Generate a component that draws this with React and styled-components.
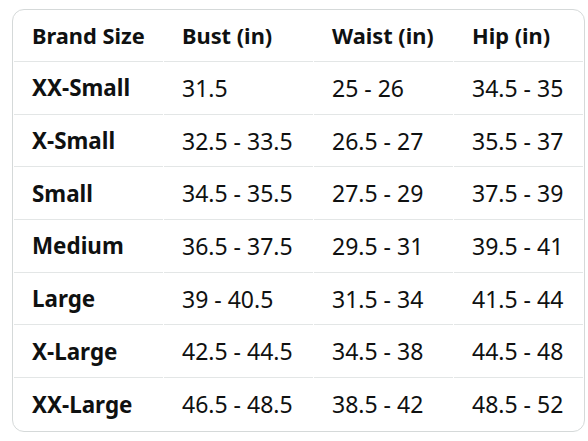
import React from "react";
import styled, { createGlobalStyle } from "styled-components";

const GlobalStyle = createGlobalStyle`
  html, body { margin: 0; padding: 0; background: #ffffff; }
  body { font-family: "Noto Sans", "Open Sans", Arial, sans-serif; color: #0f1111; }
`;

const rows = [
  ["XX-Small", "31.5", "25 - 26", "34.5 - 35"],
  ["X-Small", "32.5 - 33.5", "26.5 - 27", "35.5 - 37"],
  ["Small", "34.5 - 35.5", "27.5 - 29", "37.5 - 39"],
  ["Medium", "36.5 - 37.5", "29.5 - 31", "39.5 - 41"],
  ["Large", "39 - 40.5", "31.5 - 34", "41.5 - 44"],
  ["X-Large", "42.5 - 44.5", "34.5 - 38", "44.5 - 48"],
  ["XX-Large", "46.5 - 48.5", "38.5 - 42", "48.5 - 52"],
];

const headers = ["Brand Size", "Bust (in)", "Waist (in)", "Hip (in)"];
const widths = [149, 149, 139, 129];

export default function App() {
  return (
    <Page>
      <GlobalStyle />
      <Table>
        <colgroup>
          {widths.map((w, i) => (
            <col key={i} style={{ width: w }} />
          ))}
        </colgroup>
        <thead>
          <tr>
            {headers.map((h) => (
              <HeadCell key={h}>{h}</HeadCell>
            ))}
          </tr>
        </thead>
        <tbody>
          {rows.map((r, ri) => (
            <tr key={r[0]}>
              {r.map((c, ci) => (
                <Cell key={ci} $bold={ci === 0} $last={ri === rows.length - 1}>
                  {c}
                </Cell>
              ))}
            </tr>
          ))}
        </tbody>
      </Table>
    </Page>
  );
}

const Page = styled.div`
  padding: 9px 3px 10px 12px;
`;

const Table = styled.table`
  width: 573px;
  table-layout: fixed;
  border-collapse: separate;
  border-spacing: 1px 0;
  border: 1px solid #d5d9d9;
  border-radius: 12px;
  padding: 0;
`;

const HeadCell = styled.th`
  height: 52px;
  padding: 0 0 1px 18px;
  text-align: left;
  font-size: 21.8px;
  font-weight: 700;
  white-space: nowrap;
  border-bottom: 1px solid #e3e6e6;
  box-sizing: border-box;
`;

const Cell = styled.td`
  height: 52.7px;
  padding: 0 0 0 18px;
  font-size: ${({ $bold }) => ($bold ? "22.4px" : "23px")};
  white-space: nowrap;
  font-weight: ${({ $bold }) => ($bold ? 700 : 400)};
  border-bottom: ${({ $last }) => ($last ? "none" : "1px solid #e3e6e6")};
  box-sizing: border-box;
`;
